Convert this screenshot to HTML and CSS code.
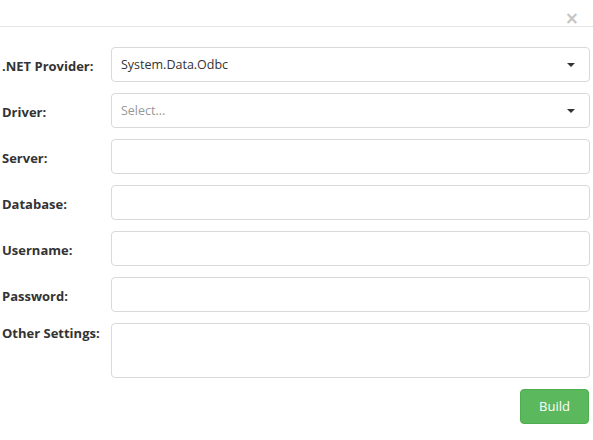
FILE: index.html
```html
<!DOCTYPE html>
<html>
<head>
<meta charset="utf-8">
<link rel="stylesheet" href="styles.css">
</head>
<body>
<div class="modal">
  <div class="modal-header">
    <span class="close">×</span>
  </div>
  <div class="modal-body">
    <div class="row">
      <label class="lbl">.NET Provider:</label>
      <div class="control select"><span class="val">System.Data.Odbc</span><span class="caret"></span></div>
    </div>
    <div class="row">
      <label class="lbl">Driver:</label>
      <div class="control select"><span class="ph">Select...</span><span class="caret"></span></div>
    </div>
    <div class="row">
      <label class="lbl">Server:</label>
      <div class="control"></div>
    </div>
    <div class="row">
      <label class="lbl">Database:</label>
      <div class="control"></div>
    </div>
    <div class="row">
      <label class="lbl">Username:</label>
      <div class="control"></div>
    </div>
    <div class="row">
      <label class="lbl">Password:</label>
      <div class="control"></div>
    </div>
    <div class="row top">
      <label class="lbl">Other Settings:</label>
      <div class="control area"></div>
    </div>
    <div class="actions">
      <button class="btn">Build</button>
    </div>
  </div>
</div>
</body>
</html>
```
FILE: styles.css
```css
html, body {
  margin: 0;
  padding: 0;
  background: #fff;
}
body {
  font-family: "Open Sans", "Noto Sans", sans-serif;
  font-size: 12.5px;
  color: #333;
}
.modal-header {
  height: 26px;
  box-sizing: content-box;
  border-bottom: 1px solid #e5e5e5;
  display: flex;
  justify-content: flex-end;
  align-items: flex-start;
  padding-right: 14px;
}
.close {
  font-family: "DejaVu Sans", sans-serif;
  font-weight: bold;
  font-size: 17px;
  line-height: 17px;
  color: #c4c4c4;
  margin-top: 10px;
}
.modal-body {
  padding: 20px 3px 0 2px;
}
.row {
  display: flex;
  align-items: center;
  margin-bottom: 11px;
}
.row.top {
  align-items: flex-start;
}
.row.top .lbl {
  padding-top: 1px;
}
.lbl {
  width: 109px;
  flex: none;
  font-weight: bold;
  font-size: 13px;
  color: #333;
  padding-top: 2px;
}
.control {
  flex: 1;
  height: 35px;
  box-sizing: border-box;
  border: 1px solid #d9d9d9;
  border-radius: 4px;
  display: flex;
  align-items: center;
  padding: 0 10px 0 9px;
}
.control.area {
  height: 55px;
}
.select {
  justify-content: space-between;
}
.val {
  color: #333;
}
.ph {
  color: #999;
}
.caret {
  width: 0;
  height: 0;
  border-left: 4px solid transparent;
  border-right: 4px solid transparent;
  border-top: 4px solid #333;
  margin-right: 4px;
}
.actions {
  display: flex;
  justify-content: flex-end;
  padding-top: 0;
}
.btn {
  width: 69px;
  height: 35px;
  background: #5cb85c;
  border: 1px solid #4cae4c;
  border-radius: 4px;
  color: #fff;
  font-family: "Open Sans", "Noto Sans", sans-serif;
  font-size: 13px;
  padding: 0 0 2px;
  margin-right: 1px;
}
```
